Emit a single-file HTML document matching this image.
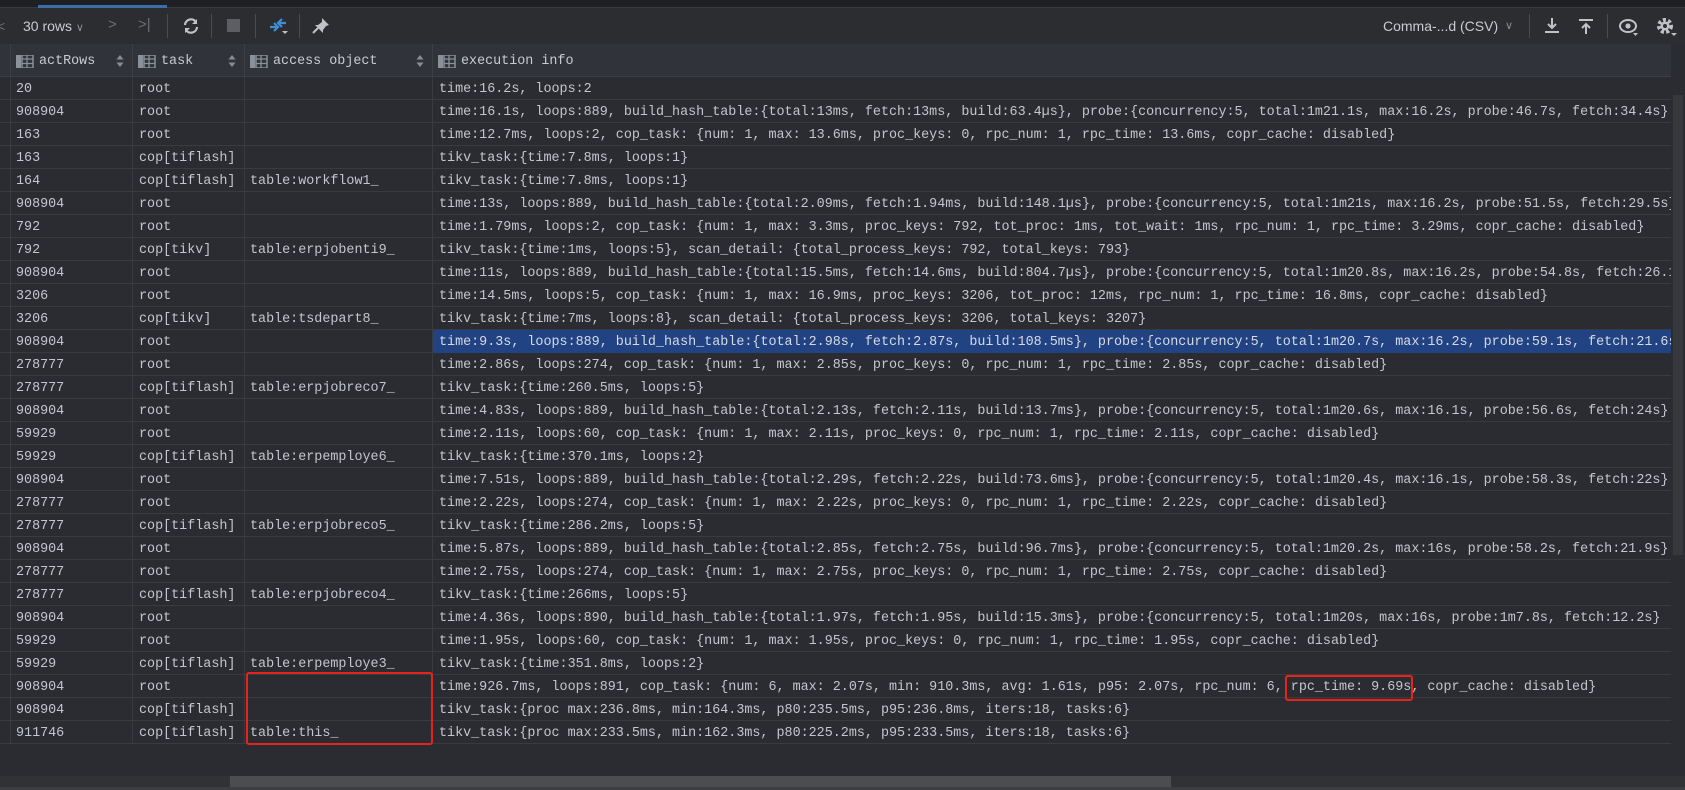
<!DOCTYPE html>
<html><head><meta charset="utf-8">
<style>
*{margin:0;padding:0;box-sizing:border-box}
body{width:1685px;height:790px;overflow:hidden;background:#2b2c31;font-family:"Liberation Mono",monospace;color:#c3c6cc;position:relative}
.top{position:absolute;left:0;top:0;width:1685px;height:8px;background:#1f2023;border-bottom:1px solid #3a3b3f}
.tabline{position:absolute;left:38px;top:5px;width:129px;height:3px;background:#3d6ea8}
.tb{position:absolute;left:0;top:8px;width:1685px;height:36px;background:#2b2d30;font-family:"Liberation Sans",sans-serif;font-size:14px;color:#c9cbd0}
.tb span{position:absolute;top:10px}
.sep{position:absolute;top:6px;width:1px;height:24px;background:#4a4c50}
.hdr{position:absolute;left:0;top:44px;width:1671px;height:33px;background:#31333a;border-bottom:1px solid #3d3f45}
.h{position:absolute;top:0;height:33px;border-right:1px solid #3d3f45;font-size:13.4px;line-height:35px;color:#c8cbd1}
.h .ic{position:absolute;left:5px;top:11px;width:18px;height:13px}
.h .t{position:absolute;left:28px}
.rows{position:absolute;left:0;top:77px;width:1671px}
.r{position:relative;height:23px;border-bottom:1px solid #3a3b40;font-size:13.4px;line-height:25px;white-space:pre}
.r div{position:absolute;top:0;height:23px;border-right:1px solid #3a3b40;overflow:hidden}
.c0{left:0;width:11px}.c1{left:11px;width:122px;padding-left:5px}.c2{left:133px;width:112px;padding-left:6px}.c3{left:245px;width:188px;padding-left:5px}.c4{left:433px;width:1238px;padding-left:6px;border-right:none!important}
.sel .c4{background:#214283;color:#d6dae2}
.vs{position:absolute;left:1671px;top:44px;width:14px;height:732px;background:#2b2c31}
.vs i{position:absolute;left:2px;top:51px;width:10px;height:460px;background:#36383c}
.hs{position:absolute;left:0;top:776px;width:1685px;height:11px;background:#313236}
.hs i{position:absolute;left:230px;top:0;width:941px;height:11px;background:#4b4d50}
.bot{position:absolute;left:0;top:787px;width:1685px;height:3px;background:#3c3e42}
.box{position:absolute;border:2px solid #e8231c;border-radius:3px}
</style></head><body>
<div class="top"><div class="tabline"></div></div>
<div class="tb">
<span style="left:-3px;color:#6b6e74">&lt;</span>
<span style="left:23px">30 rows <span style="position:static;color:#8a8d93;font-size:11px">&#x2228;</span></span>
<span style="left:108px;color:#6b6e74;font-size:15px;top:8px">&gt;</span>
<span style="left:138px;color:#6b6e74;font-size:15px;top:8px">&gt;|</span>
<div class="sep" style="left:167px"></div>
<svg style="position:absolute;left:182px;top:9px" width="18" height="18" viewBox="0 0 18 18"><path d="M3 8a6 6 0 0 1 11-3M15 10a6 6 0 0 1-11 3" stroke="#c0c2c7" stroke-width="2.2" fill="none"/><path d="M15 2v5h-5zM3 16v-5h5z" fill="#c0c2c7"/></svg>
<div class="sep" style="left:211px"></div>
<div style="position:absolute;left:227px;top:11px;width:13px;height:13px;background:#5c5e63"></div>
<div class="sep" style="left:255px"></div>
<svg style="position:absolute;left:268px;top:8px" width="22" height="20" viewBox="0 0 22 20"><path d="M2 11h8M6 7l4 4-4 4" stroke="#3d8fd6" stroke-width="2.2" fill="none"/><path d="M18 7h-8M14 3l-4 4 4 4" stroke="#3d8fd6" stroke-width="2.2" fill="none"/><path d="M14 15h6l-3 3z" fill="#c0c2c7"/></svg>
<div class="sep" style="left:299px"></div>
<svg style="position:absolute;left:311px;top:9px" width="20" height="18" viewBox="0 0 20 18"><path d="M11 1l7 7-3 1-3 4 0 3-8-8 3 0 4-3z" fill="#c0c2c7"/><path d="M7 11l-5 5" stroke="#c0c2c7" stroke-width="2"/></svg>
<span style="left:1383px">Comma-...d (CSV)</span>
<span style="left:1505px;color:#8a8d93;font-size:11px;top:11px">&#x2228;</span>
<div class="sep" style="left:1529px"></div>
<svg style="position:absolute;left:1543px;top:9px" width="18" height="18" viewBox="0 0 18 18"><path d="M9 1v10M5 7l4 4 4-4" stroke="#c0c2c7" stroke-width="2" fill="none"/><path d="M2 15h14" stroke="#c0c2c7" stroke-width="2"/></svg>
<svg style="position:absolute;left:1577px;top:9px" width="18" height="18" viewBox="0 0 18 18"><path d="M9 17V7M5 11l4-4 4 4" stroke="#c0c2c7" stroke-width="2" fill="none"/><path d="M2 3h14" stroke="#c0c2c7" stroke-width="2"/></svg>
<div class="sep" style="left:1607px"></div>
<svg style="position:absolute;left:1618px;top:9px" width="22" height="20" viewBox="0 0 22 20"><ellipse cx="10" cy="9" rx="8" ry="6" stroke="#c0c2c7" stroke-width="2" fill="none"/><circle cx="10" cy="9" r="2.6" fill="#c0c2c7"/><path d="M15 16h5l-2.5 3z" fill="#c0c2c7"/></svg>
<svg style="position:absolute;left:1655px;top:8px" width="24" height="22" viewBox="0 0 24 22"><circle cx="10" cy="10" r="6" stroke="#c0c2c7" stroke-width="4" stroke-dasharray="3 2.2" fill="none"/><circle cx="10" cy="10" r="4.5" fill="#c0c2c7"/><circle cx="10" cy="10" r="2" fill="#2b2d30"/><path d="M16 17h6l-3 3z" fill="#c0c2c7"/></svg>
</div>
<div class="hdr">
<div class="h" style="left:0;width:11px"></div>
<div class="h" style="left:11px;width:122px"><svg class="ic" viewBox="0 0 18 13"><rect x="0" y="0" width="5" height="13" fill="#8b9099"/><rect x="6" y="0" width="11" height="13" fill="none" stroke="#8b9099" stroke-width="1.5"/><path d="M6 4h11M6 8.5h11M11 0v13" stroke="#8b9099" stroke-width="1.3"/></svg><span class="t">actRows</span></div>
<div class="h" style="left:133px;width:112px"><svg class="ic" viewBox="0 0 18 13"><rect x="0" y="0" width="5" height="13" fill="#8b9099"/><rect x="6" y="0" width="11" height="13" fill="none" stroke="#8b9099" stroke-width="1.5"/><path d="M6 4h11M6 8.5h11M11 0v13" stroke="#8b9099" stroke-width="1.3"/></svg><span class="t">task</span></div>
<div class="h" style="left:245px;width:188px"><svg class="ic" viewBox="0 0 18 13"><rect x="0" y="0" width="5" height="13" fill="#8b9099"/><rect x="6" y="0" width="11" height="13" fill="none" stroke="#8b9099" stroke-width="1.5"/><path d="M6 4h11M6 8.5h11M11 0v13" stroke="#8b9099" stroke-width="1.3"/></svg><span class="t">access object</span></div>
<div class="h" style="left:433px;width:1238px;border-right:none"><svg class="ic" viewBox="0 0 18 13"><rect x="0" y="0" width="5" height="13" fill="#8b9099"/><rect x="6" y="0" width="11" height="13" fill="none" stroke="#8b9099" stroke-width="1.5"/><path d="M6 4h11M6 8.5h11M11 0v13" stroke="#8b9099" stroke-width="1.3"/></svg><span class="t">execution info</span></div>
</div>
<svg style="position:absolute;left:116px;top:55px" width="8" height="12"><path d="M4 0l3.5 4.5h-7zM4 12l3.5-4.5h-7z" fill="#8a8d93"/></svg>
<svg style="position:absolute;left:228px;top:55px" width="8" height="12"><path d="M4 0l3.5 4.5h-7zM4 12l3.5-4.5h-7z" fill="#8a8d93"/></svg>
<svg style="position:absolute;left:416px;top:55px" width="8" height="12"><path d="M4 0l3.5 4.5h-7zM4 12l3.5-4.5h-7z" fill="#8a8d93"/></svg>
<div class="rows">
<div class="r"><div class="c0"></div><div class="c1">20</div><div class="c2">root</div><div class="c3"></div><div class="c4">time:16.2s, loops:2</div></div>
<div class="r"><div class="c0"></div><div class="c1">908904</div><div class="c2">root</div><div class="c3"></div><div class="c4">time:16.1s, loops:889, build_hash_table:{total:13ms, fetch:13ms, build:63.4µs}, probe:{concurrency:5, total:1m21.1s, max:16.2s, probe:46.7s, fetch:34.4s}</div></div>
<div class="r"><div class="c0"></div><div class="c1">163</div><div class="c2">root</div><div class="c3"></div><div class="c4">time:12.7ms, loops:2, cop_task: {num: 1, max: 13.6ms, proc_keys: 0, rpc_num: 1, rpc_time: 13.6ms, copr_cache: disabled}</div></div>
<div class="r"><div class="c0"></div><div class="c1">163</div><div class="c2">cop[tiflash]</div><div class="c3"></div><div class="c4">tikv_task:{time:7.8ms, loops:1}</div></div>
<div class="r"><div class="c0"></div><div class="c1">164</div><div class="c2">cop[tiflash]</div><div class="c3">table:workflow1_</div><div class="c4">tikv_task:{time:7.8ms, loops:1}</div></div>
<div class="r"><div class="c0"></div><div class="c1">908904</div><div class="c2">root</div><div class="c3"></div><div class="c4">time:13s, loops:889, build_hash_table:{total:2.09ms, fetch:1.94ms, build:148.1µs}, probe:{concurrency:5, total:1m21s, max:16.2s, probe:51.5s, fetch:29.5s}</div></div>
<div class="r"><div class="c0"></div><div class="c1">792</div><div class="c2">root</div><div class="c3"></div><div class="c4">time:1.79ms, loops:2, cop_task: {num: 1, max: 3.3ms, proc_keys: 792, tot_proc: 1ms, tot_wait: 1ms, rpc_num: 1, rpc_time: 3.29ms, copr_cache: disabled}</div></div>
<div class="r"><div class="c0"></div><div class="c1">792</div><div class="c2">cop[tikv]</div><div class="c3">table:erpjobenti9_</div><div class="c4">tikv_task:{time:1ms, loops:5}, scan_detail: {total_process_keys: 792, total_keys: 793}</div></div>
<div class="r"><div class="c0"></div><div class="c1">908904</div><div class="c2">root</div><div class="c3"></div><div class="c4">time:11s, loops:889, build_hash_table:{total:15.5ms, fetch:14.6ms, build:804.7µs}, probe:{concurrency:5, total:1m20.8s, max:16.2s, probe:54.8s, fetch:26.1s}</div></div>
<div class="r"><div class="c0"></div><div class="c1">3206</div><div class="c2">root</div><div class="c3"></div><div class="c4">time:14.5ms, loops:5, cop_task: {num: 1, max: 16.9ms, proc_keys: 3206, tot_proc: 12ms, rpc_num: 1, rpc_time: 16.8ms, copr_cache: disabled}</div></div>
<div class="r"><div class="c0"></div><div class="c1">3206</div><div class="c2">cop[tikv]</div><div class="c3">table:tsdepart8_</div><div class="c4">tikv_task:{time:7ms, loops:8}, scan_detail: {total_process_keys: 3206, total_keys: 3207}</div></div>
<div class="r sel"><div class="c0"></div><div class="c1">908904</div><div class="c2">root</div><div class="c3"></div><div class="c4">time:9.3s, loops:889, build_hash_table:{total:2.98s, fetch:2.87s, build:108.5ms}, probe:{concurrency:5, total:1m20.7s, max:16.2s, probe:59.1s, fetch:21.6s}</div></div>
<div class="r"><div class="c0"></div><div class="c1">278777</div><div class="c2">root</div><div class="c3"></div><div class="c4">time:2.86s, loops:274, cop_task: {num: 1, max: 2.85s, proc_keys: 0, rpc_num: 1, rpc_time: 2.85s, copr_cache: disabled}</div></div>
<div class="r"><div class="c0"></div><div class="c1">278777</div><div class="c2">cop[tiflash]</div><div class="c3">table:erpjobreco7_</div><div class="c4">tikv_task:{time:260.5ms, loops:5}</div></div>
<div class="r"><div class="c0"></div><div class="c1">908904</div><div class="c2">root</div><div class="c3"></div><div class="c4">time:4.83s, loops:889, build_hash_table:{total:2.13s, fetch:2.11s, build:13.7ms}, probe:{concurrency:5, total:1m20.6s, max:16.1s, probe:56.6s, fetch:24s}</div></div>
<div class="r"><div class="c0"></div><div class="c1">59929</div><div class="c2">root</div><div class="c3"></div><div class="c4">time:2.11s, loops:60, cop_task: {num: 1, max: 2.11s, proc_keys: 0, rpc_num: 1, rpc_time: 2.11s, copr_cache: disabled}</div></div>
<div class="r"><div class="c0"></div><div class="c1">59929</div><div class="c2">cop[tiflash]</div><div class="c3">table:erpemploye6_</div><div class="c4">tikv_task:{time:370.1ms, loops:2}</div></div>
<div class="r"><div class="c0"></div><div class="c1">908904</div><div class="c2">root</div><div class="c3"></div><div class="c4">time:7.51s, loops:889, build_hash_table:{total:2.29s, fetch:2.22s, build:73.6ms}, probe:{concurrency:5, total:1m20.4s, max:16.1s, probe:58.3s, fetch:22s}</div></div>
<div class="r"><div class="c0"></div><div class="c1">278777</div><div class="c2">root</div><div class="c3"></div><div class="c4">time:2.22s, loops:274, cop_task: {num: 1, max: 2.22s, proc_keys: 0, rpc_num: 1, rpc_time: 2.22s, copr_cache: disabled}</div></div>
<div class="r"><div class="c0"></div><div class="c1">278777</div><div class="c2">cop[tiflash]</div><div class="c3">table:erpjobreco5_</div><div class="c4">tikv_task:{time:286.2ms, loops:5}</div></div>
<div class="r"><div class="c0"></div><div class="c1">908904</div><div class="c2">root</div><div class="c3"></div><div class="c4">time:5.87s, loops:889, build_hash_table:{total:2.85s, fetch:2.75s, build:96.7ms}, probe:{concurrency:5, total:1m20.2s, max:16s, probe:58.2s, fetch:21.9s}</div></div>
<div class="r"><div class="c0"></div><div class="c1">278777</div><div class="c2">root</div><div class="c3"></div><div class="c4">time:2.75s, loops:274, cop_task: {num: 1, max: 2.75s, proc_keys: 0, rpc_num: 1, rpc_time: 2.75s, copr_cache: disabled}</div></div>
<div class="r"><div class="c0"></div><div class="c1">278777</div><div class="c2">cop[tiflash]</div><div class="c3">table:erpjobreco4_</div><div class="c4">tikv_task:{time:266ms, loops:5}</div></div>
<div class="r"><div class="c0"></div><div class="c1">908904</div><div class="c2">root</div><div class="c3"></div><div class="c4">time:4.36s, loops:890, build_hash_table:{total:1.97s, fetch:1.95s, build:15.3ms}, probe:{concurrency:5, total:1m20s, max:16s, probe:1m7.8s, fetch:12.2s}</div></div>
<div class="r"><div class="c0"></div><div class="c1">59929</div><div class="c2">root</div><div class="c3"></div><div class="c4">time:1.95s, loops:60, cop_task: {num: 1, max: 1.95s, proc_keys: 0, rpc_num: 1, rpc_time: 1.95s, copr_cache: disabled}</div></div>
<div class="r"><div class="c0"></div><div class="c1">59929</div><div class="c2">cop[tiflash]</div><div class="c3">table:erpemploye3_</div><div class="c4">tikv_task:{time:351.8ms, loops:2}</div></div>
<div class="r"><div class="c0"></div><div class="c1">908904</div><div class="c2">root</div><div class="c3"></div><div class="c4">time:926.7ms, loops:891, cop_task: {num: 6, max: 2.07s, min: 910.3ms, avg: 1.61s, p95: 2.07s, rpc_num: 6, rpc_time: 9.69s, copr_cache: disabled}</div></div>
<div class="r"><div class="c0"></div><div class="c1">908904</div><div class="c2">cop[tiflash]</div><div class="c3"></div><div class="c4">tikv_task:{proc max:236.8ms, min:164.3ms, p80:235.5ms, p95:236.8ms, iters:18, tasks:6}</div></div>
<div class="r"><div class="c0"></div><div class="c1">911746</div><div class="c2">cop[tiflash]</div><div class="c3">table:this_</div><div class="c4">tikv_task:{proc max:233.5ms, min:162.3ms, p80:225.2ms, p95:233.5ms, iters:18, tasks:6}</div></div>
</div>
<div class="box" style="left:246px;top:672px;width:187px;height:73px"></div>
<div class="box" style="left:1285px;top:675px;width:128px;height:26px"></div>
<div class="vs"><i></i></div>
<div class="hs"><i></i></div>
<div class="bot"></div>
</body></html>
